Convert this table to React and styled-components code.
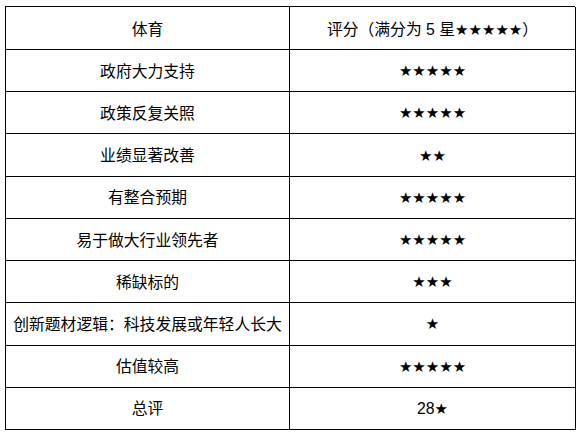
import React from 'react'
import styled, { createGlobalStyle } from 'styled-components'

const GlobalStyle = createGlobalStyle`
  html, body {
    margin: 0;
    padding: 0;
    background: #ffffff;
  }
  body {
    font-family: "Liberation Sans", "Noto Sans CJK SC", sans-serif;
    color: #000000;
  }
`

const Page = styled.div`
  padding: 6px 0 0 5px;
`

const Table = styled.div`
  width: 570px;
  height: 424px;
  display: grid;
  grid-template-columns: 284px 286px;
  grid-template-rows: 43px repeat(9, 1fr);
  border-top: 1px solid #000;
  border-left: 1px solid #000;
  box-sizing: border-box;
`

const Cell = styled.div`
  display: flex;
  align-items: center;
  justify-content: center;
  border-right: 1px solid #000;
  border-bottom: 1px solid #000;
  font-size: 15.8px;
  line-height: 1;
  padding-top: ${(p) => (p.$head ? '4px' : '2px')};
  white-space: nowrap;
  box-sizing: border-box;
`

const Stars = styled.span`
  font-family: "DejaVu Sans", sans-serif;
  font-size: 15px;
`

const rows = [
  ['政府大力支持', '★★★★★'],
  ['政策反复关照', '★★★★★'],
  ['业绩显著改善', '★★'],
  ['有整合预期', '★★★★★'],
  ['易于做大行业领先者', '★★★★★'],
  ['稀缺标的', '★★★'],
  ['创新题材逻辑：科技发展或年轻人长大', '★'],
  ['估值较高', '★★★★★'],
  ['总评', '28★'],
]

function Score({ value }) {
  const num = value.replace(/★/g, '')
  const stars = value.slice(num.length)
  return (
    <>
      {num}
      <Stars>{stars}</Stars>
    </>
  )
}

export default function App() {
  return (
    <Page>
      <GlobalStyle />
      <Table>
        <Cell $head>体育</Cell>
        <Cell $head>
          评分（满分为 5 星<Stars>★★★★★</Stars>）
        </Cell>
        {rows.map(([name, score]) => (
          <React.Fragment key={name}>
            <Cell>{name}</Cell>
            <Cell>
              <Score value={score} />
            </Cell>
          </React.Fragment>
        ))}
      </Table>
    </Page>
  )
}
